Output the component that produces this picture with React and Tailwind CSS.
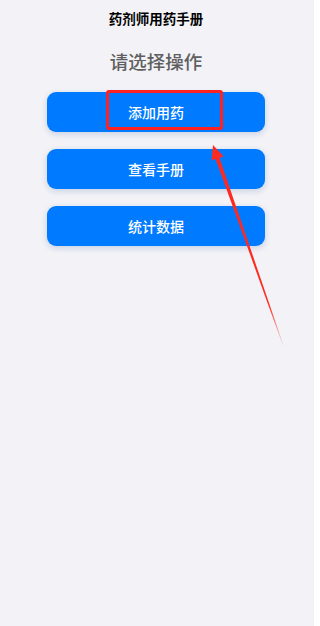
const actions = ["添加用药", "查看手册", "统计数据"];

const App = () => {
  return (
    <div
      className="relative w-[314px] min-h-screen bg-[#f2f2f7] pr-[2px] flex flex-col items-center"
      style={{ fontFamily: '"Noto Sans CJK SC", "Noto Sans", sans-serif' }}
    >
      {/* NAV TITLE */}
      <div className="h-9 w-full flex items-center justify-center">
        <span className="text-[13.5px] font-semibold text-black">药剂师用药手册</span>
      </div>

      <h1 className="mt-[11px] text-[18.5px] leading-7 font-medium text-[#5f5f5f]">请选择操作</h1>

      {/* ACTIONS */}
      <div className="mt-[17px] flex flex-col gap-[17px]">
        {actions.map((label) => (
          <button
            key={label}
            className="w-[218px] h-[40px] rounded-[9px] bg-[#007aff] text-white text-[14px] font-medium shadow-[0_2px_6px_rgba(0,60,140,0.18)]"
          >
            {label}
          </button>
        ))}
      </div>

      {/* ANNOTATION */}
      <div className="absolute left-[106px] top-[90px] w-[117px] h-[40px] border-[3px] border-[#ff2222] rounded-[3px] pointer-events-none" />
      <svg className="absolute inset-0 pointer-events-none" width="314" height="626" viewBox="0 0 314 626">
        <defs>
          <linearGradient id="fade" x1="213" y1="145" x2="283" y2="345" gradientUnits="userSpaceOnUse">
            <stop offset="0" stopColor="#ff2a1f" />
            <stop offset="0.8" stopColor="#ff2a1f" />
            <stop offset="1" stopColor="#ff2a1f" stopOpacity="0.1" />
          </linearGradient>
        </defs>
        <polygon
          points="213,145 223.6,156.4 219.4,157.8 283.4,345 282.8,345.2 215.6,159 211.6,160.6"
          fill="url(#fade)"
        />
      </svg>
    </div>
  );
};

export default App;
